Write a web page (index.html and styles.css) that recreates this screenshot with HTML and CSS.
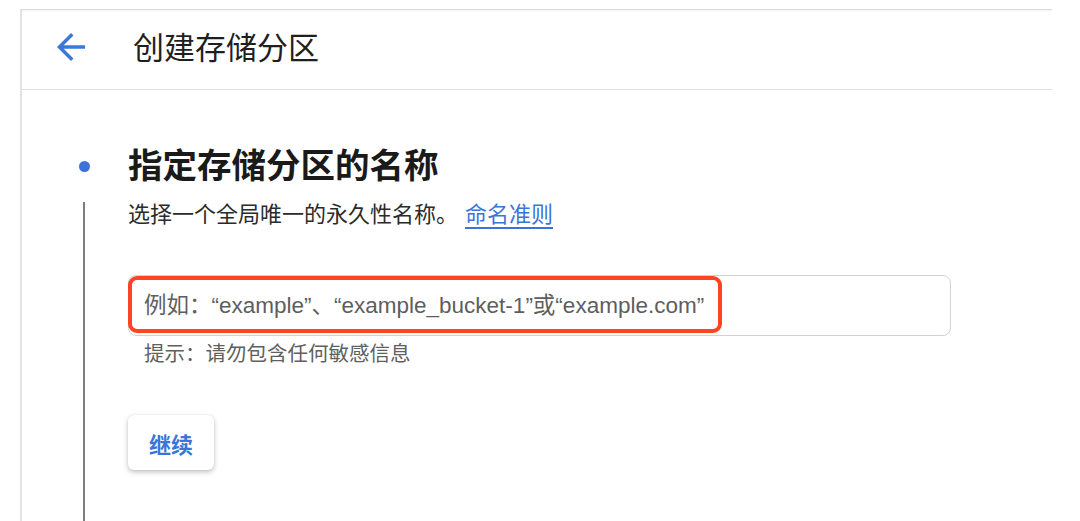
FILE: index.html
```html
<!DOCTYPE html>
<html lang="zh-CN">
<head>
    <meta charset="UTF-8">
    <meta name="viewport" content="width=device-width, initial-scale=1.0">
    <title>创建存储分区</title>
    <link rel="stylesheet" href="styles.css">
</head>
<body>
    <div class="page">
        <header class="topbar">
            <button class="back-btn" aria-label="返回">
                <svg viewBox="0 0 24 24" width="42" height="42">
                    <path d="M20 11H7.83l5.59-5.59L12 4l-8 8 8 8 1.41-1.41L7.83 13H20v-2z" fill="currentColor"/>
                </svg>
            </button>
            <h1>创建存储分区</h1>
        </header>

        <section class="step">
            <div class="rail">
                <span class="dot"></span>
                <span class="line"></span>
            </div>
            <div class="step-body">
                <h2>指定存储分区的名称</h2>
                <p class="desc">选择一个全局唯一的永久性名称。<a href="#">命名准则</a></p>

                <div class="field">
                    <input type="text" placeholder="例如：“example”、“example_bucket-1”或“example.com”">
                    <span class="highlight"></span>
                </div>
                <p class="hint">提示：请勿包含任何敏感信息</p>

                <button class="continue">继续</button>
            </div>
        </section>
    </div>
</body>
</html>
```

FILE: styles.css
```css
* {
    margin: 0;
    padding: 0;
    box-sizing: border-box;
}
body {
    background: #fff;
    color: #202124;
    font-family: Roboto, "Noto Sans CJK SC", sans-serif;
    padding-top: 9px;
    overflow: hidden;
}
.page {
    margin-left: 20px;
    width: 1032px;
    height: 520px;
    border-left: 2px solid #e3e3e3;
    border-top: 1px solid #dcdcdc;
}
.topbar {
    height: 80px;
    display: flex;
    align-items: center;
    border-bottom: 1px solid #e0e0e0;
    box-shadow: inset 0 2px 2px -1px rgba(0, 0, 0, 0.06);
    padding-bottom: 9px;
}
.back-btn {
    width: 42px;
    height: 42px;
    margin-left: 28px;
    margin-top: 4px;
    border: none;
    background: none;
    color: #3d77dc;
    display: flex;
    cursor: pointer;
}
.topbar h1 {
    margin-left: 41px;
    font-size: 31px;
    font-weight: 400;
    color: #1f1f1f;
}
.step {
    display: flex;
    padding-top: 54px;
}
.rail {
    width: 24px;
    margin-left: 50px;
    display: flex;
    flex-direction: column;
    align-items: center;
}
.dot {
    width: 11px;
    height: 11px;
    margin-top: 17px;
    border-radius: 50%;
    background: #3d73d9;
}
.line {
    width: 2px;
    height: 320px;
    margin-top: 30px;
    background: #7d7d7d;
}
.step-body {
    margin-left: 32px;
}
.step-body h2 {
    font-size: 34.5px;
    font-weight: 700;
    line-height: 44px;
    color: #1a1a1a;
}
.desc {
    margin-top: 12px;
    font-size: 22px;
    line-height: 30px;
    color: #2b2b2b;
}
.desc a {
    margin-left: 7px;
    color: #3b74d8;
    text-underline-offset: 5px;
    text-decoration-thickness: 2px;
}
.field {
    position: relative;
    margin-top: 45px;
    width: 823px;
}
.field input {
    width: 100%;
    height: 61px;
    padding: 0 15px;
    border: 1.5px solid #d2d2d2;
    border-radius: 8px;
    font-family: "Liberation Sans", "Noto Sans CJK SC", sans-serif;
    font-size: 22.5px;
    color: #202124;
    outline: none;
}
.field input::placeholder {
    color: #5e5e5e;
}
.highlight {
    position: absolute;
    left: 0;
    top: 1px;
    width: 594px;
    height: 57px;
    border: 4px solid #ff4423;
    border-radius: 9px;
    pointer-events: none;
}
.hint {
    margin-top: 5px;
    padding-left: 16px;
    font-size: 20.5px;
    line-height: 26px;
    color: #5f5f5f;
}
.continue {
    margin-top: 48px;
    width: 86px;
    height: 55px;
    border: none;
    border-radius: 6px;
    background: #fff;
    box-shadow: 0 2px 5px rgba(0, 0, 0, 0.25), 0 0 1px rgba(0, 0, 0, 0.1);
    color: #3b74d8;
    font-family: "Noto Sans CJK SC", sans-serif;
    font-size: 22px;
    font-weight: 700;
    cursor: pointer;
}
```
